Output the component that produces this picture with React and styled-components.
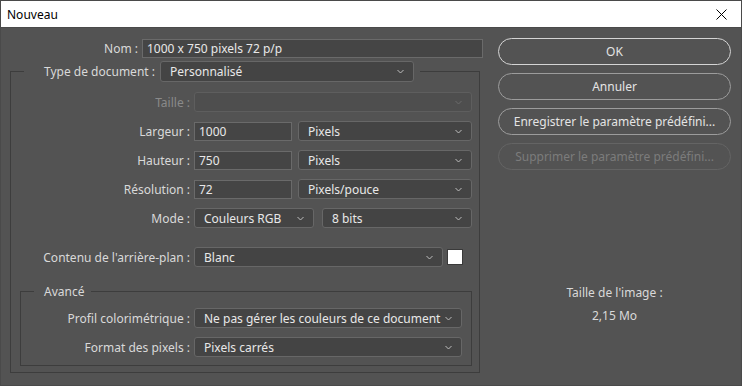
import styled, { createGlobalStyle } from "styled-components";

const GlobalStyle = createGlobalStyle`
  html, body {
    margin: 0;
    padding: 0;
    background: #535353;
  }
  * {
    box-sizing: border-box;
  }
`;

const Window = styled.div`
  width: 742px;
  height: 386px;
  border: 1px solid #4a4a4a;
  border-top: none;
  background: #535353;
  font-family: "Noto Sans", "Open Sans", sans-serif;
  font-size: 12px;
  color: #d9d9d9;
  display: flex;
  flex-direction: column;
  overflow: hidden;
`;

const TitleBar = styled.div`
  height: 28px;
  margin: 0 -1px;
  border: 1px solid #4a4a4a;
  background: #ffffff;
  color: #000;
  display: flex;
  align-items: center;
  justify-content: space-between;
  padding: 0 14px 0 6px;
  font-size: 12px;
`;

const Body = styled.div`
  flex: 1;
  display: flex;
  padding: 10px 10px 0 9px;
  gap: 14px;
`;

const LeftCol = styled.div`
  width: 474px;
  display: flex;
  flex-direction: column;
`;

const RightCol = styled.div`
  flex: 1;
  display: flex;
  flex-direction: column;
  gap: 8px;
`;

const Row = styled.div`
  display: grid;
  grid-template-columns: ${(p) => p.$label}px 1fr;
  column-gap: 4px;
  align-items: center;
  height: 20px;
`;

const Label = styled.span`
  text-align: right;
  white-space: nowrap;
  color: ${(p) => (p.$disabled ? "#8a8a8a" : "#d9d9d9")};
`;

const Controls = styled.div`
  display: flex;
  gap: ${(p) => p.$gap || 6}px;
  align-items: center;
  height: 100%;
`;

const TextField = styled.div`
  width: ${(p) => (p.$w ? `${p.$w}px` : "auto")};
  flex: ${(p) => (p.$w ? "none" : 1)};
  height: 19px;
  background: #454545;
  border: 1px solid #6a6a6a;
  color: #e8e8e8;
  padding: 0 4px;
  display: flex;
  align-items: center;
  white-space: nowrap;
`;

const SelectBox = styled.div`
  width: ${(p) => (p.$w ? `${p.$w}px` : "auto")};
  flex: ${(p) => (p.$w ? "none" : 1)};
  height: ${(p) => p.$h || 20}px;
  background: ${(p) => (p.$disabled ? "#4e4e4e" : "#444444")};
  border: 1px solid ${(p) => (p.$disabled ? "#5e5e5e" : "#676767")};
  border-radius: 3px;
  color: #e8e8e8;
  padding: 0 9px 0 9px;
  display: flex;
  align-items: center;
  justify-content: space-between;
  white-space: nowrap;
`;

const Chevron = ({ dim }) => (
  <svg width="7" height="5" viewBox="0 0 7 5">
    <path
      d="M0.5 1 L3.5 4 L6.5 1"
      fill="none"
      stroke={dim ? "#6a6a6a" : "#bdbdbd"}
      strokeWidth="1"
    />
  </svg>
);

const Select = ({ value, w, h, disabled }) => (
  <SelectBox $w={w} $h={h} $disabled={disabled}>
    <span>{value}</span>
    <Chevron dim={disabled} />
  </SelectBox>
);

const Frame = styled.fieldset`
  margin: ${(p) => p.$mt || 0}px 0 0 ${(p) => p.$ml || 0}px;
  width: ${(p) => p.$w}px;
  border: 1px solid #3d3d3d;
  padding: ${(p) => p.$pad};
  display: flex;
  flex-direction: column;
  gap: 9px;
  min-width: 0;
`;

const Legend = styled.legend`
  margin-left: 13px;
  padding: ${(p) => p.$pad};
  display: flex;
  align-items: center;
  gap: 5px;
  color: #d9d9d9;
`;

const Swatch = styled.div`
  width: 16px;
  height: 16px;
  background: #ffffff;
  border: 1px solid #3a3a3a;
  flex: none;
`;

const Spacer = styled.span`
  width: ${(p) => p.$w}px;
  flex: none;
`;

const PillButton = styled.div`
  height: 27px;
  border-radius: 14px;
  border: 1px solid
    ${(p) => (p.$primary ? "#d4d4d4" : p.$disabled ? "#646464" : "#9c9c9c")};
  color: ${(p) => (p.$disabled ? "#7c7c7c" : "#e4e4e4")};
  display: flex;
  align-items: center;
  justify-content: center;
  white-space: nowrap;
`;

const SizeInfo = styled.div`
  margin-top: 107px;
  display: flex;
  flex-direction: column;
  align-items: center;
  gap: 7px;
  line-height: 16px;
  color: #d9d9d9;
`;

export default function App() {
  return (
    <>
      <GlobalStyle />
      <Window>
        <TitleBar>
          <span>Nouveau</span>
          <svg width="11" height="11" viewBox="0 0 11 11">
            <path d="M0.5 0.5 L10.5 10.5 M10.5 0.5 L0.5 10.5" stroke="#000" strokeWidth="1" />
          </svg>
        </TitleBar>
        <Body>
          <LeftCol>
            <Row $label={128}>
              <Label>Nom :</Label>
              <Controls>
                <TextField $w={341}>1000 x 750 pixels 72 p/p</TextField>
              </Controls>
            </Row>
            <Frame $w={470} $mt={3} $pad="10px 7px 6px 0">
              <Legend $pad="0 6px 0 20px">
                <span>Type de document :</span>
                <Select value="Personnalisé" w={254} h={21} />
              </Legend>
              <Row $label={179}>
                <Label $disabled>Taille :</Label>
                <Select value="" disabled />
              </Row>
              <Row $label={179}>
                <Label>Largeur :</Label>
                <Controls>
                  <TextField $w={98}>1000</TextField>
                  <Select value="Pixels" />
                </Controls>
              </Row>
              <Row $label={179}>
                <Label>Hauteur :</Label>
                <Controls>
                  <TextField $w={98}>750</TextField>
                  <Select value="Pixels" />
                </Controls>
              </Row>
              <Row $label={179}>
                <Label>Résolution :</Label>
                <Controls>
                  <TextField $w={98}>72</TextField>
                  <Select value="Pixels/pouce" />
                </Controls>
              </Row>
              <Row $label={179}>
                <Label>Mode :</Label>
                <Controls $gap={8}>
                  <Select value="Couleurs RGB" w={120} />
                  <Select value="8 bits" />
                </Controls>
              </Row>
              <Row $label={179} style={{ marginTop: 10 }}>
                <Label>Contenu de l'arrière-plan :</Label>
                <Controls $gap={4}>
                  <Select value="Blanc" />
                  <Swatch />
                  <Spacer $w={5} />
                </Controls>
              </Row>
              <Frame $w={452} $ml={9} $mt={7} $pad="8px 9px 8px 0">
                <Legend $pad="0 7px 0 10px">Avancé</Legend>
                <Row $label={169}>
                  <Label>Profil colorimétrique :</Label>
                  <Select value="Ne pas gérer les couleurs de ce document" />
                </Row>
                <Row $label={169}>
                  <Label>Format des pixels :</Label>
                  <Select value="Pixels carrés" />
                </Row>
              </Frame>
            </Frame>
          </LeftCol>
          <RightCol>
            <PillButton $primary>OK</PillButton>
            <PillButton>Annuler</PillButton>
            <PillButton>Enregistrer le paramètre prédéfini...</PillButton>
            <PillButton $disabled>Supprimer le paramètre prédéfini...</PillButton>
            <SizeInfo>
              <span>Taille de l'image :</span>
              <span>2,15 Mo</span>
            </SizeInfo>
          </RightCol>
        </Body>
      </Window>
    </>
  );
}
